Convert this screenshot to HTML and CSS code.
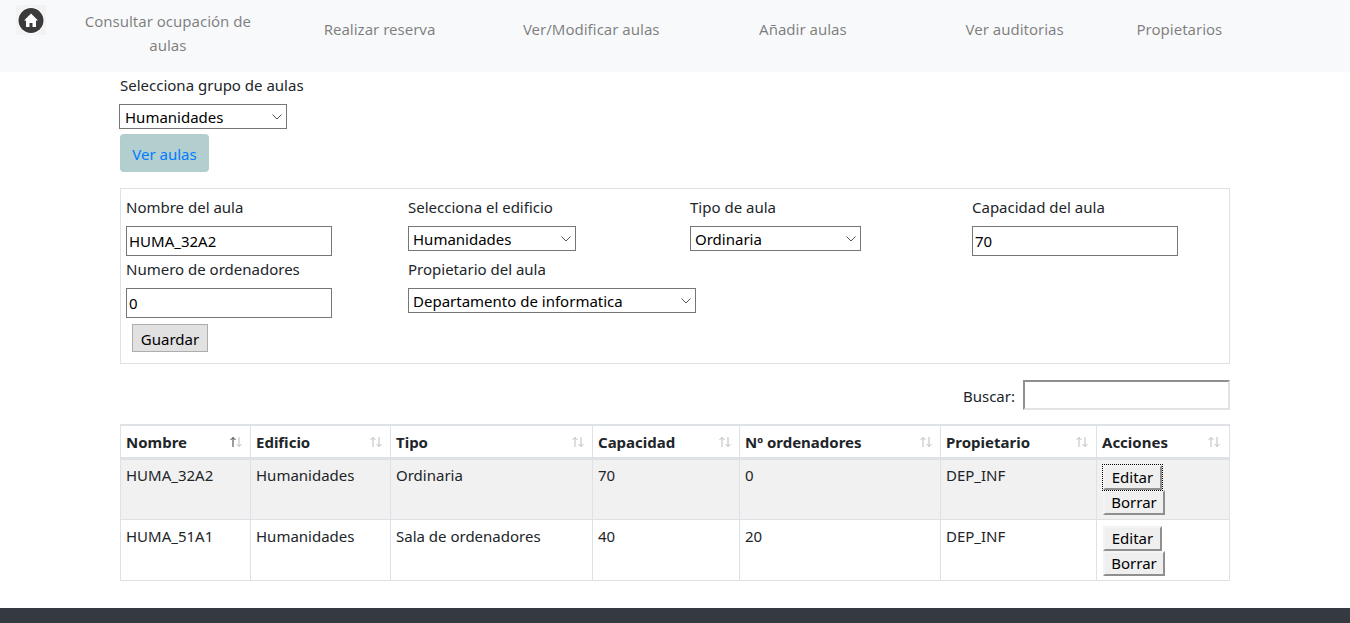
FILE: index.html
```html
<!DOCTYPE html>
<html lang="es">
<head>
<meta charset="utf-8">
<title>Ver/Modificar aulas</title>
<link rel="stylesheet" href="styles.css">
</head>
<body>
<nav class="navbar">
  <a class="home" href="#" aria-label="Inicio">
    <svg viewBox="0 0 30 30" width="30" height="30"><rect width="30" height="30" fill="#f3f3f3"/><circle cx="15" cy="15.500" r="13.300" fill="#fff"/><circle cx="15" cy="15.500" r="12.500" fill="#3b3b3d"/><path d="M15 8.500 8 15.500h2v6.500h3.500v-4h3v4h3.500v-6.500h2z" fill="#fff"/></svg>
  </a>
  <a class="nav-item nav-first" href="#">Consultar ocupación de aulas</a>
  <a class="nav-item" href="#">Realizar reserva</a>
  <a class="nav-item" href="#">Ver/Modificar aulas</a>
  <a class="nav-item" href="#">Añadir aulas</a>
  <a class="nav-item" href="#">Ver auditorias</a>
  <a class="nav-item nav-last" href="#">Propietarios</a>
</nav>
<main class="container">
  <label class="group-label">Selecciona grupo de aulas</label>
  <select class="select select-group"><option>Humanidades</option></select>
  <button class="view-btn">Ver aulas</button>
  <form class="edit-form">
    <div class="field">
      <label>Nombre del aula</label>
      <input class="input" type="text" value="HUMA_32A2">
    </div>
    <div class="field">
      <label>Selecciona el edificio</label>
      <select class="select select-building"><option>Humanidades</option></select>
    </div>
    <div class="field">
      <label>Tipo de aula</label>
      <select class="select select-type"><option>Ordinaria</option></select>
    </div>
    <div class="field">
      <label>Capacidad del aula</label>
      <input class="input" type="text" value="70">
    </div>
    <div class="field">
      <label>Numero de ordenadores</label>
      <input class="input" type="text" value="0">
    </div>
    <div class="field field-wide">
      <label>Propietario del aula</label>
      <select class="select select-owner"><option>Departamento de informatica</option></select>
    </div>
    <div class="save-row"><button type="button" class="save-btn">Guardar</button></div>
  </form>
  <div class="search-row">
    <label for="q">Buscar:</label>
    <input id="q" class="search-input" type="search">
  </div>
  <table class="data-table">
    <colgroup>
      <col class="c1"><col class="c2"><col class="c3"><col class="c4"><col class="c5"><col class="c6"><col class="c7">
    </colgroup>
    <thead>
      <tr>
        <th><span class="th-inner">Nombre<svg class="sort" viewBox="0 0 14 12" width="14" height="12"><path d="M4 11V1.500M1.500 4 4 1.500 6.500 4" fill="none" stroke="#343a40" stroke-width="1"/><path d="M10 1v9.500M7.500 8 10 10.500 12.500 8" fill="none" stroke="#b9bec4" stroke-width="1"/></svg></span></th>
        <th><span class="th-inner">Edificio<svg class="sort" viewBox="0 0 14 12" width="14" height="12"><use href="#s"/></svg></span></th>
        <th><span class="th-inner">Tipo<svg class="sort" viewBox="0 0 14 12" width="14" height="12"><use href="#s"/></svg></span></th>
        <th><span class="th-inner">Capacidad<svg class="sort" viewBox="0 0 14 12" width="14" height="12"><use href="#s"/></svg></span></th>
        <th><span class="th-inner">Nº ordenadores<svg class="sort" viewBox="0 0 14 12" width="14" height="12"><use href="#s"/></svg></span></th>
        <th><span class="th-inner">Propietario<svg class="sort" viewBox="0 0 14 12" width="14" height="12"><use href="#s"/></svg></span></th>
        <th><span class="th-inner th-last">Acciones<svg class="sort" viewBox="0 0 14 12" width="14" height="12"><use href="#s"/></svg></span></th>
      </tr>
    </thead>
    <tbody>
      <tr class="odd">
        <td>HUMA_32A2</td><td>Humanidades</td><td>Ordinaria</td><td>70</td><td>0</td><td>DEP_INF</td>
        <td class="actions"><button class="row-btn is-focus">Editar</button><button class="row-btn">Borrar</button></td>
      </tr>
      <tr>
        <td>HUMA_51A1</td><td>Humanidades</td><td>Sala de ordenadores</td><td>40</td><td>20</td><td>DEP_INF</td>
        <td class="actions"><button class="row-btn">Editar</button><button class="row-btn">Borrar</button></td>
      </tr>
    </tbody>
  </table>
</main>
<footer class="footer"></footer>
<svg class="defs" width="0" height="0" aria-hidden="true"><defs><g id="s"><path d="M4 11V1.500M1.500 4 4 1.500 6.500 4" fill="none" stroke="#b9bec4" stroke-width="1"/><path d="M10 1v9.500M7.500 8 10 10.500 12.500 8" fill="none" stroke="#b9bec4" stroke-width="1"/></g></defs></svg>
</body>
</html>
```
FILE: styles.css
```css
* { box-sizing: border-box; }
html, body { margin: 0; padding: 0; height: 100%; overflow: hidden; }
body {
  font-family: "Noto Sans", "Open Sans", sans-serif;
  font-size: 15px;
  line-height: 24px;
  color: #212529;
  background: #fff;
}
.defs { position: absolute; }
.navbar {
  display: flex;
  align-items: flex-start;
  height: 72px;
  padding-left: 16px;
  background: #f8f9fa;
}
.home { display: block; width: 30px; height: 30px; margin: 5px 16px 0 0; flex: none; }
.nav-item {
  flex: none;
  width: 211.7px;
  padding: 17px 20px 0;
  text-align: center;
  color: rgba(0,0,0,.5);
  text-decoration: none;
}
.nav-first { padding-top: 9px; }
.nav-last { width: 118px; padding-left: 0; padding-right: 0; }
.container { width: 1110px; margin: 0 0 0 120px; }
.group-label { display: block; height: 32px; padding-top: 1px; }
.select {
  display: block;
  height: 25px;
  padding: 0 0 0 4px;
  border: 1px solid #767676;
  background: #fff url("data:image/svg+xml,%3Csvg xmlns='http://www.w3.org/2000/svg' width='10' height='6'%3E%3Cpath d='M.5.5 5 5 9.500.5' fill='none' stroke='%23555'/%3E%3C/svg%3E") no-repeat right 4px center;
  appearance: none;
  border-radius: 0;
  font: inherit;
  color: #000;
}
.select-group { width: 168px; margin-left: -1px; padding-left: 5px; }
.view-btn {
  display: block;
  width: 89px;
  height: 38px;
  margin-top: 5px;
  border: 0;
  border-radius: 4px;
  background: #b2cecf;
  color: #007bff;
  font: inherit;
  padding: 1px 0 0;
}
.edit-form {
  display: grid;
  grid-template-columns: repeat(4, 282px);
  grid-auto-rows: 62px;
  height: 176px;
  margin-top: 16px;
  padding: 7px 5px 0;
  border: 1px solid #dee2e6;
}
.field { min-width: 0; }
.field label { display: block; height: 30px; line-height: 22px; }
.field-wide { grid-column: span 2; }
.input {
  display: block;
  width: 206px;
  height: 30px;
  padding: 0 2px;
  border: 1px solid #767676;
  font: inherit;
  color: #000;
}
.select-building { width: 168px; }
.select-type { width: 171px; }
.select-owner { width: 288px; }
.save-row { grid-column: 1 / -1; padding: 4px 0 0 6px; }
.save-btn {
  display: block;
  width: 76px;
  height: 28px;
  padding: 2px 0 0;
  border: 1px solid #adadad;
  background: #e1e1e1;
  font: inherit;
  color: #000;
}
.search-row {
  display: flex;
  justify-content: flex-end;
  align-items: center;
  gap: 8px;
  height: 30px;
  margin-top: 16px;
}
.search-row label { padding-top: 2px; }
.search-input {
  width: 207px;
  height: 30px;
  border: 2px solid;
  border-color: #8f8f8f #e3e3e3 #e3e3e3 #8f8f8f;
  background: #fff;
}
.data-table {
  width: 1109px;
  margin-top: 14px;
  border-collapse: collapse;
  table-layout: fixed;
  border: 1px solid #dee2e6;
}
.c1 { width: 130px; } .c2 { width: 140px; } .c3 { width: 202px; } .c4 { width: 147px; }
.c5 { width: 201px; } .c6 { width: 156px; } .c7 { width: 133px; }
th, td { border: 1px solid #dee2e6; padding: 0 5px; text-align: left; vertical-align: top; }
thead th { height: 33px; border-top-width: 2px; border-bottom-width: 3px; font-weight: 700; padding-top: 4px; color: #212529; }
.th-inner { display: flex; justify-content: space-between; align-items: center; padding-right: 2px; }
.th-last { padding-right: 3px; }
tbody td { height: 61px; padding-top: 4px; }
tr.odd td { padding-top: 3px; background: #f1f1f1; }
td.actions { padding-top: 6px; padding-left: 6px; }
tr.odd td.actions { padding-top: 5px; }
.row-btn {
  display: block;
  height: 25px;
  padding: 0;
  border: 2px solid;
  border-color: #f4f4f4 #8f8f8f #8f8f8f #f4f4f4;
  background: #efefef;
  font: inherit;
  line-height: 20px;
  color: #000;
}
.row-btn:first-child { width: 59px; }
.row-btn:last-child { width: 62px; }
.is-focus { outline: 1px dotted #000; outline-offset: 0; }
.footer {
  position: fixed;
  left: 0;
  right: 0;
  bottom: 0;
  height: 15px;
  background: #343a40;
}
```
